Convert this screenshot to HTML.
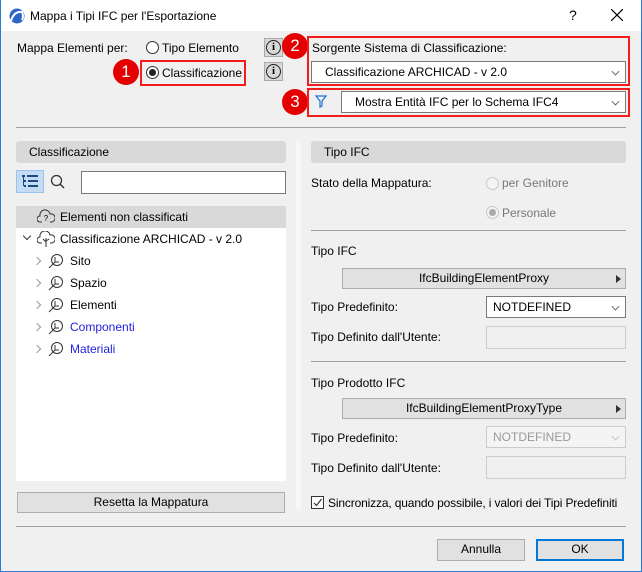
<!DOCTYPE html>
<html><head><meta charset="utf-8"><style>
*{box-sizing:border-box;margin:0;padding:0}
body{width:642px;height:572px;overflow:hidden;background:#f0f0f0;font-family:"Liberation Sans",sans-serif;font-size:12px;color:#000;position:relative}
.a{position:absolute}
.t{position:absolute;white-space:nowrap;line-height:14px}
.sep{position:absolute;height:1px;background:#a0a0a0}
.hdr{position:absolute;background:#d9d9d9;border-radius:3px;height:22px;line-height:22px;padding-left:13px}
.dd{position:absolute;background:#fff;border:1px solid #7a7a7a;height:22px;line-height:20px}
.chev{position:absolute;right:6px;top:6px;width:7px;height:7px;border-right:1px solid #555;border-bottom:1px solid #555;transform:rotate(45deg) scale(.8)}
.btn{position:absolute;background:#e1e1e1;border:1px solid #adadad;text-align:center;line-height:19px}
.badge{position:absolute;width:26px;height:26px;border-radius:50%;background:#e40000;color:#fff;font-size:17px;line-height:26px;text-align:center}
.red{position:absolute;border:2px solid #f21d1d}
.radio{position:absolute;width:13px;height:13px;border:1px solid #333;border-radius:50%;background:#fff}
.info{position:absolute;width:19px;height:19px;background:#d8d8d8;border:1px solid #aaa}
.info div{position:absolute;left:1px;top:1px;width:15px;height:15px;border:1px solid #222;border-radius:50%;font-size:11px;line-height:13px;text-align:center;font-family:"Liberation Serif",serif;font-weight:bold}
.row{position:absolute;left:0;height:22px;line-height:22px;white-space:nowrap}
.arr{position:absolute;width:6px;height:6px;border-right:1.5px solid #999;border-bottom:1.5px solid #999;transform:rotate(-45deg)}
.ic{position:absolute;left:32px}
</style></head><body>
<div class="a" style="left:0;top:0;width:642px;height:31px;background:#fff"></div>
<div class="a" style="left:0;top:0;width:1px;height:572px;background:#2b7bd4"></div>
<div class="a" style="right:0;top:0;width:1px;height:572px;background:#2b7bd4"></div>
<div class="a" style="left:0;bottom:0;width:642px;height:1px;background:#2b7bd4"></div>
<svg class="a" style="left:9px;top:8px" width="16" height="16" viewBox="0 0 16 16"><circle cx="8" cy="8" r="7.5" fill="#2f66c4"/><path d="M2 13 Q5 3 13 4 Q15 8 13 12" fill="none" stroke="#fff" stroke-width="2"/></svg>
<div class="t" style="left:30px;top:9px;font-size:12px">Mappa i Tipi IFC per l'Esportazione</div>
<div class="t" style="left:569px;top:8px;font-size:14px">?</div>
<svg class="a" style="left:611px;top:9px" width="12" height="12"><path d="M0 0L12 12M12 0L0 12" stroke="#000" stroke-width="1.2"/></svg>

<div class="t" style="left:17px;top:41px">Mappa Elementi per:</div>
<div class="radio" style="left:146px;top:41px"></div>
<div class="t" style="left:162px;top:41px">Tipo Elemento</div>
<div class="red" style="left:140px;top:60px;width:106px;height:26px"></div>
<div class="radio" style="left:146px;top:66px"><div class="a" style="left:2px;top:2px;width:7px;height:7px;border-radius:50%;background:#222"></div></div>
<div class="t" style="left:162px;top:66px">Classificazione</div>
<div class="badge" style="left:113px;top:59px">1</div>
<div class="info" style="left:264px;top:38px"><div>i</div></div>
<div class="info" style="left:264px;top:62px"><div>i</div></div>
<div class="badge" style="left:282px;top:33px">2</div>
<div class="badge" style="left:282px;top:89px">3</div>
<div class="red" style="left:307px;top:36px;width:323px;height:50px"></div>
<div class="t" style="left:312px;top:41px">Sorgente Sistema di Classificazione:</div>
<div class="dd" style="left:311px;top:61px;width:315px;padding-left:13px">Classificazione ARCHICAD - v 2.0<div class="chev"></div></div>
<div class="red" style="left:307px;top:88px;width:323px;height:29px"></div>
<svg class="a" style="left:315px;top:95px" width="12" height="13"><path d="M1 1H11L7 6V11L5 12V6Z" fill="none" stroke="#1e6fd9" stroke-width="1.2"/></svg>
<div class="dd" style="left:341px;top:91px;width:285px;padding-left:13px">Mostra Entità IFC per lo Schema IFC4<div class="chev"></div></div>
<div class="sep" style="left:16px;top:127px;width:610px"></div>

<div class="hdr" style="left:16px;top:141px;width:270px">Classificazione</div>
<div class="a" style="left:16px;top:170px;width:28px;height:23px;background:#c4dcf3;border:1px solid #99c3ea"></div>
<svg class="a" style="left:22px;top:175px" width="17" height="13"><g fill="#1a4a80"><rect x="0" y="0" width="3" height="2"/><rect x="5" y="0" width="11" height="2"/><rect x="2" y="5" width="2" height="2"/><rect x="6" y="5" width="10" height="2"/><rect x="2" y="10" width="2" height="2"/><rect x="6" y="10" width="10" height="2"/><rect x="1" y="2" width="1" height="9"/></g></svg>
<svg class="a" style="left:50px;top:174px" width="16" height="16"><circle cx="6.5" cy="6.5" r="5" fill="none" stroke="#333" stroke-width="1.3"/><path d="M10 10L14 14" stroke="#333" stroke-width="1.5"/></svg>
<div class="a" style="left:81px;top:171px;width:205px;height:23px;background:#fff;border:1px solid #7a7a7a"></div>
<div class="a" style="left:16px;top:206px;width:270px;height:275px;background:#fff">
 <div class="row" style="top:0;width:270px;background:#d9d9d9"></div>
 <svg class="a" style="left:21px;top:3px" width="18" height="16"><path d="M5 13H3A3 3 0 0 1 3 7A5 5 0 0 1 13 5A4 4 0 0 1 15 13H13" fill="none" stroke="#333"/><text x="9" y="12" font-size="8" text-anchor="middle" font-family="Liberation Sans">?</text></svg>
 <div class="row" style="left:44px;top:0">Elementi non classificati</div>
 <div class="a" style="left:8px;top:27px;width:6px;height:6px;border-right:1.5px solid #333;border-bottom:1.5px solid #333;transform:rotate(45deg)"></div>
 <svg class="a" style="left:21px;top:25px" width="18" height="16"><path d="M5 12H3A3 3 0 0 1 3 6A5 5 0 0 1 13 4A4 4 0 0 1 15 12H13M9 16V7M9 11L6 8M9 10L12 8" fill="none" stroke="#333"/></svg>
 <div class="row" style="left:44px;top:22px">Classificazione ARCHICAD - v 2.0</div>
 <div class="arr" style="left:18px;top:52px"></div><svg class="ic" style="top:47px" width="16" height="16"><circle cx="9" cy="7" r="5.5" fill="none" stroke="#333"/><path d="M1 15L7 9M7 9V4M7 9H11" fill="none" stroke="#333"/></svg><div class="row" style="left:54px;top:44px">Sito</div>
 <div class="arr" style="left:18px;top:74px"></div><svg class="ic" style="top:69px" width="16" height="16"><circle cx="9" cy="7" r="5.5" fill="none" stroke="#333"/><path d="M1 15L7 9M7 9V4M7 9H11" fill="none" stroke="#333"/></svg><div class="row" style="left:54px;top:66px">Spazio</div>
 <div class="arr" style="left:18px;top:96px"></div><svg class="ic" style="top:91px" width="16" height="16"><circle cx="9" cy="7" r="5.5" fill="none" stroke="#333"/><path d="M1 15L7 9M7 9V4M7 9H11" fill="none" stroke="#333"/></svg><div class="row" style="left:54px;top:88px">Elementi</div>
 <div class="arr" style="left:18px;top:118px"></div><svg class="ic" style="top:113px" width="16" height="16"><circle cx="9" cy="7" r="5.5" fill="none" stroke="#333"/><path d="M1 15L7 9M7 9V4M7 9H11" fill="none" stroke="#333"/></svg><div class="row" style="left:54px;top:110px;color:#1f1fe0">Componenti</div>
 <div class="arr" style="left:18px;top:140px"></div><svg class="ic" style="top:135px" width="16" height="16"><circle cx="9" cy="7" r="5.5" fill="none" stroke="#333"/><path d="M1 15L7 9M7 9V4M7 9H11" fill="none" stroke="#333"/></svg><div class="row" style="left:54px;top:132px;color:#1f1fe0">Materiali</div>
</div>
<div class="btn" style="left:17px;top:492px;width:268px;height:21px">Resetta la Mappatura</div>

<div class="a" style="left:296px;top:141px;width:5px;height:368px;background:#f7f7f7"></div>
<div class="hdr" style="left:311px;top:141px;width:315px">Tipo IFC</div>
<div class="t" style="left:311px;top:176px">Stato della Mappatura:</div>
<div class="radio" style="left:486px;top:177px;border-color:#c8c8c8;background:#f4f4f4"></div>
<div class="t" style="left:502px;top:176px;color:#777">per Genitore</div>
<div class="radio" style="left:486px;top:206px;border-color:#c8c8c8;background:#f4f4f4"><div class="a" style="left:2px;top:2px;width:7px;height:7px;border-radius:50%;background:#aaa"></div></div>
<div class="t" style="left:502px;top:206px;color:#777">Personale</div>
<div class="sep" style="left:311px;top:230px;width:315px"></div>
<div class="t" style="left:311px;top:244px">Tipo IFC</div>
<div class="btn" style="left:342px;top:268px;width:284px;height:21px">IfcBuildingElementProxy<svg class="a" style="right:4px;top:6px" width="5" height="8"><path d="M0 0L5 4L0 8Z" fill="#333"/></svg></div>
<div class="t" style="left:311px;top:300px">Tipo Predefinito:</div>
<div class="dd" style="left:486px;top:296px;width:140px;padding-left:6px">NOTDEFINED<div class="chev"></div></div>
<div class="t" style="left:311px;top:330px">Tipo Definito dall'Utente:</div>
<div class="a" style="left:486px;top:326px;width:140px;height:23px;border:1px solid #ccc"></div>
<div class="sep" style="left:311px;top:361px;width:315px"></div>
<div class="t" style="left:311px;top:376px">Tipo Prodotto IFC</div>
<div class="btn" style="left:342px;top:398px;width:284px;height:21px">IfcBuildingElementProxyType<svg class="a" style="right:4px;top:6px" width="5" height="8"><path d="M0 0L5 4L0 8Z" fill="#333"/></svg></div>
<div class="t" style="left:311px;top:431px">Tipo Predefinito:</div>
<div class="dd" style="left:486px;top:426px;width:140px;padding-left:6px;border-color:#ccc;color:#999;background:#f4f4f4">NOTDEFINED<div class="chev" style="border-color:#bbb"></div></div>
<div class="t" style="left:311px;top:461px">Tipo Definito dall'Utente:</div>
<div class="a" style="left:486px;top:456px;width:140px;height:23px;border:1px solid #ccc"></div>
<div class="a" style="left:311px;top:496px;width:13px;height:13px;border:1px solid #333;background:#fff"></div>
<svg class="a" style="left:312px;top:497px" width="11" height="11"><path d="M2 6L4.5 8.5L9.5 2" fill="none" stroke="#333" stroke-width="1.2"/></svg>
<div class="t" style="left:328px;top:496px;letter-spacing:-0.15px">Sincronizza, quando possibile, i valori dei Tipi Predefiniti</div>

<div class="sep" style="left:16px;top:526px;width:610px"></div>
<div class="btn" style="left:437px;top:539px;width:88px;height:22px">Annulla</div>
<div class="btn" style="left:536px;top:539px;width:88px;height:22px;border:2px solid #0078d7;line-height:17px">OK</div>
</body></html>
